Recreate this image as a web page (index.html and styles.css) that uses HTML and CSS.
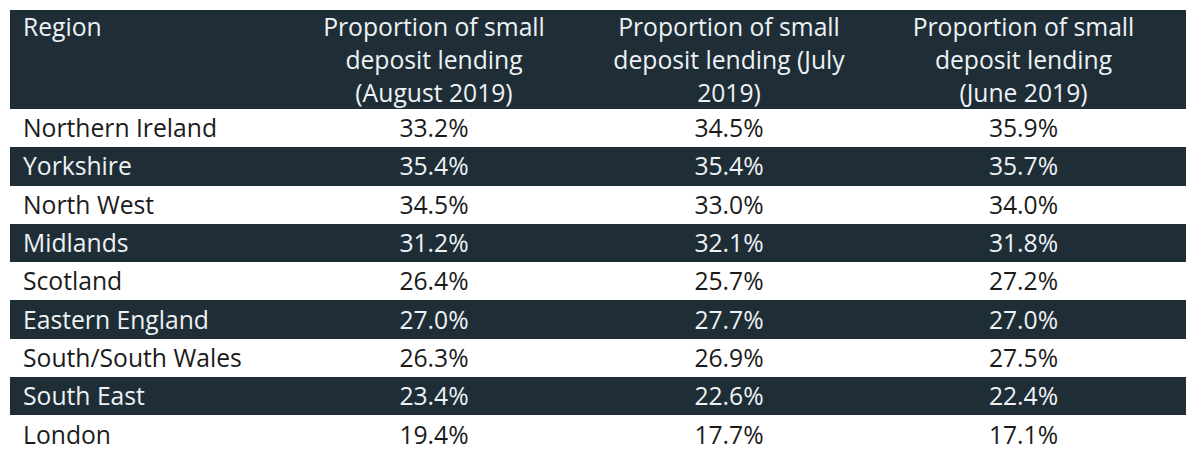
FILE: index.html
```html
<!DOCTYPE html>
<html lang="en">
<head>
<meta charset="utf-8">
<title>Small deposit lending by region</title>
<link rel="stylesheet" href="styles.css">
</head>
<body>
<table class="lending">
  <colgroup>
    <col class="c1"><col class="c2"><col class="c3"><col class="c4">
  </colgroup>
  <thead>
    <tr>
      <th class="region">Region</th>
      <th>Proportion of small<br>deposit lending<br>(August 2019)</th>
      <th>Proportion of small<br>deposit lending (July<br>2019)</th>
      <th class="last">Proportion of small<br>deposit lending<br>(June 2019)</th>
    </tr>
  </thead>
  <tbody>
    <tr><td class="region">Northern Ireland</td><td>33.2%</td><td>34.5%</td><td class="last">35.9%</td></tr>
    <tr class="dark"><td class="region">Yorkshire</td><td>35.4%</td><td>35.4%</td><td class="last">35.7%</td></tr>
    <tr><td class="region">North West</td><td>34.5%</td><td>33.0%</td><td class="last">34.0%</td></tr>
    <tr class="dark"><td class="region">Midlands</td><td>31.2%</td><td>32.1%</td><td class="last">31.8%</td></tr>
    <tr><td class="region">Scotland</td><td>26.4%</td><td>25.7%</td><td class="last">27.2%</td></tr>
    <tr class="dark"><td class="region">Eastern England</td><td>27.0%</td><td>27.7%</td><td class="last">27.0%</td></tr>
    <tr><td class="region">South/South Wales</td><td>26.3%</td><td>26.9%</td><td class="last">27.5%</td></tr>
    <tr class="dark"><td class="region">South East</td><td>23.4%</td><td>22.6%</td><td class="last">22.4%</td></tr>
    <tr><td class="region">London</td><td>19.4%</td><td>17.7%</td><td class="last">17.1%</td></tr>
  </tbody>
</table>
</body>
</html>
```
FILE: styles.css
```css
html, body {
  margin: 0;
  padding: 0;
  background: #ffffff;
}
body {
  padding: 10px 0 0 10px;
  font-family: "Open Sans", "Noto Sans", sans-serif;
}
.lending {
  border-collapse: collapse;
  table-layout: fixed;
  width: 1176px;
  font-size: 24.7px;
  color: #1b1b1b;
}
.c1 { width: 277px; }
.c2 { width: 294px; }
.c3 { width: 296px; }
.c4 { width: 309px; }
.lending th {
  background: #1f2d37;
  color: #eef2f4;
  font-weight: 400;
  line-height: 33px;
  height: 99px;
  padding: 0;
  vertical-align: top;
  text-align: center;
  white-space: nowrap;
}
.lending th.region { text-align: left; padding-left: 13px; }
.lending th.last { padding-right: 16px; }
.lending td {
  height: 38.3px;
  padding: 0;
  line-height: 38px;
  text-align: center;
  white-space: nowrap;
}
.lending td.region { text-align: left; padding-left: 13px; }
.lending td.last { padding-right: 16px; }
.lending tr.dark td {
  background: #1f2d37;
  color: #eef2f4;
}
```
